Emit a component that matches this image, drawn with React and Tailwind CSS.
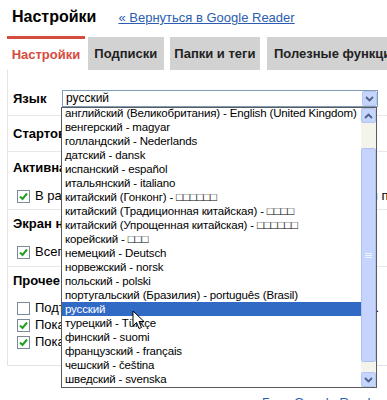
import React from "react";

const languages = [
  "английский (Великобритания) - English (United Kingdom)",
  "венгерский - magyar",
  "голландский - Nederlands",
  "датский - dansk",
  "испанский - español",
  "итальянский - italiano",
  "китайский (Гонконг) - □□□□□□",
  "китайский (Традиционная китайская) - □□□□",
  "китайский (Упрощенная китайская) - □□□□□□",
  "корейский - □□□",
  "немецкий - Deutsch",
  "норвежский - norsk",
  "польский - polski",
  "португальский (Бразилия) - português (Brasil)",
  "русский",
  "турецкий - Türkçe",
  "финский - suomi",
  "французский - français",
  "чешский - čeština",
  "шведский - svenska",
  "эстонский - eesti",
];

const Chevron = ({ up }) => (
  <svg width="9" height="6" viewBox="0 0 9 6">
    <polyline
      points={up ? "1,5 4.5,1.5 8,5" : "1,1 4.5,4.5 8,1"}
      fill="none"
      stroke="#4d6185"
      strokeWidth="1.8"
    />
  </svg>
);

const ScrollButton = ({ up }) => (
  <div className="h-[15px] w-[15px] flex items-center justify-center bg-[#c5d5fc] border border-[#b2c6f2] rounded-[2px]">
    <Chevron up={up} />
  </div>
);

const Checkbox = ({ checked }) => (
  <div className="w-[13px] h-[13px] border border-[#7a8a99] bg-white flex items-center justify-center shrink-0">
    {checked && (
      <svg width="9" height="9" viewBox="0 0 9 9">
        <polyline points="1,4.5 3.5,7 8,1.5" fill="none" stroke="#21a121" strokeWidth="2" />
      </svg>
    )}
  </div>
);

const CheckRow = ({ checked, text, className = "" }) => (
  <div className={`flex items-center h-[14px] pl-[9px] gap-[5px] ${className}`}>
    <Checkbox checked={checked} />
    <span className="text-[13px] whitespace-nowrap">{text}</span>
  </div>
);

const Label = ({ children, className = "" }) => (
  <div className={`text-[13px] font-bold leading-[14px] h-[14px] whitespace-nowrap ${className}`}>{children}</div>
);

export default function App() {
  return (
    <div className="relative w-[387px] h-[400px] overflow-hidden bg-white text-black font-['Liberation_Sans',Arial,sans-serif]">
      {/* Header */}
      <div className="flex items-baseline pl-[12px] h-[36px] pt-[6px]">
        <h1 className="text-[16px] font-bold leading-[22px]">Настройки</h1>
        <a href="#" className="ml-[22px] text-[13px] text-[#2a5db0] underline">
          « Вернуться в Google Reader
        </a>
      </div>

      {/* Tabs */}
      <div className="flex items-end pl-[7px] h-[34px] whitespace-nowrap text-[13px] font-bold">
        <div className="w-[82px] h-[34px] border-t-[3px] border-[#d54b3d] bg-white text-[#d54b3d] flex items-center justify-center">
          Настройки
        </div>
        <div className="ml-[3px] w-[80px] h-[33px] bg-[#d2d2d2] text-[#222] flex items-center justify-center">
          Подписки
        </div>
        <div className="ml-[6px] w-[95px] h-[33px] bg-[#d2d2d2] text-[#222] flex items-center justify-center">
          Папки и теги
        </div>
        <div className="ml-[7px] w-[120px] h-[33px] bg-[#d2d2d2] text-[#222] flex items-center pl-[7px]">
          Полезные функции
        </div>
      </div>

      {/* Settings panel */}
      <div className="ml-[7px] w-[400px] border-l border-b border-[#e3e3e3]">
        <div className="h-[46px] border-b border-[#e8e8e8] pt-[20px] pl-[5px] flex items-start">
          <div className="w-[49px] h-[17px] flex items-center">
            <Label>Язык</Label>
          </div>
          <div className="w-[316px] h-[17px] border border-[#7f9db9] flex items-center justify-between">
            <span className="text-[12px] pl-[3px] leading-[15px]">русский</span>
            <ScrollButton />
          </div>
        </div>

        <div className="h-[36px] border-b border-[#e8e8e8] pl-[5px] flex items-center">
          <Label>Стартовая страница</Label>
        </div>

        <div className="h-[58px] border-b border-[#e8e8e8] pl-[5px] pt-[9px]">
          <Label>Активная учетная запись</Label>
          <CheckRow
            checked
            className="mt-[14px] -ml-[5px]"
            text="В разделе «Все элементы» показывать новые элементы первыми"
          />
        </div>

        <div className="h-[57px] border-b border-[#e8e8e8] pl-[5px] pt-[7px]">
          <Label>Экран навигации</Label>
          <CheckRow
            checked
            className="mt-[14px] -ml-[5px]"
            text="Всегда начинать с раздела «Главная»"
          />
        </div>

        <div className="h-[98px] pl-[5px] pt-[7px]">
          <Label>Прочее</Label>
          <CheckRow
            className="mt-[13px] -ml-[5px]"
            text="Подтверждать отметку всех элементов как прочитанных."
          />
          <CheckRow checked className="mt-[3px] -ml-[5px]" text="Показывать количество новых элементов" />
          <CheckRow checked className="mt-[3px] -ml-[5px]" text="Показывать всплывающие подсказки" />
        </div>
      </div>

      <div className="pl-[262px] pt-[27px] text-[13px] text-[#2a5db0] whitespace-nowrap">
        Бета Google Reader - Справка
      </div>

      {/* Open dropdown list */}
      <div className="absolute left-[61px] top-[107px] w-[316px] h-[281px] border border-[#5a5a5a] bg-white flex overflow-hidden">
        <div className="flex-1 overflow-hidden">
          <div className="-mt-[2px]">
            {languages.map((lang) => (
              <div
                key={lang}
                className={`h-[14px] leading-[14px] pl-[3px] text-[11.5px] tracking-[-0.15px] whitespace-nowrap ${
                  lang === "русский" ? "bg-[#316ac5] text-white" : "text-black"
                }`}
              >
                {lang}
              </div>
            ))}
          </div>
        </div>
        <div className="w-[15px] flex flex-col bg-[#f4f3ec]">
          <ScrollButton up />
          <div className="h-[25px]" />
          <div className="h-[214px] bg-[#c4d4fc] border border-[#aec3f1] rounded-[2px] flex flex-col items-center justify-center gap-[1px]">
            <div className="w-[7px] h-[1px] bg-[#eef3ff]" />
            <div className="w-[7px] h-[1px] bg-[#eef3ff]" />
            <div className="w-[7px] h-[1px] bg-[#eef3ff]" />
          </div>
          <div className="flex-1" />
          <ScrollButton />
        </div>
      </div>

      {/* Mouse pointer */}
      <svg className="absolute left-[132px] top-[310px]" width="13" height="20" viewBox="0 0 13 20">
        <path
          d="M1 1 L1 16 L4.5 12.5 L7 18.5 L9.5 17.5 L7 11.5 L12 11.5 Z"
          fill="#fff"
          stroke="#000"
          strokeWidth="1"
          strokeLinejoin="round"
        />
      </svg>
    </div>
  );
}
